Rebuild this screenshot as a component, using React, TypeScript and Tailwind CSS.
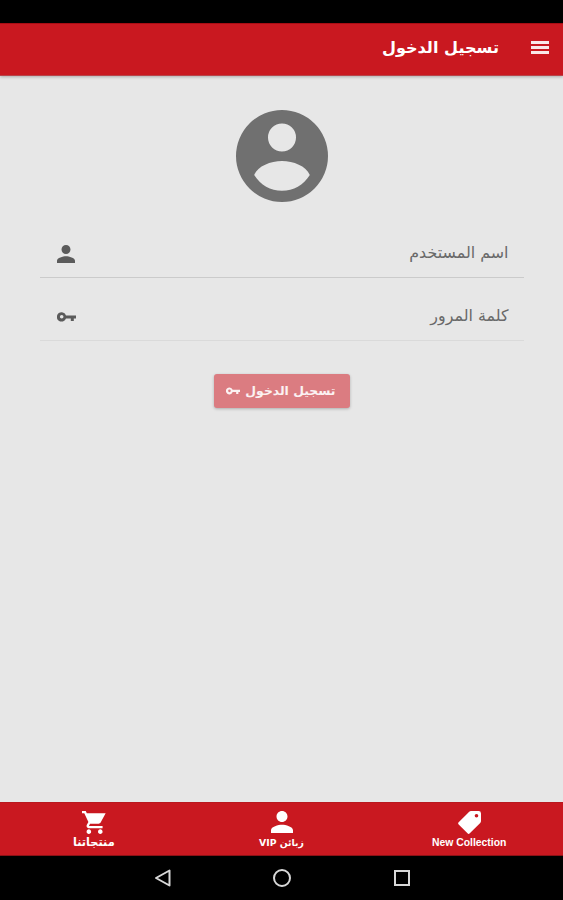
import type { ReactNode } from "react";

type IconProps = {
  className?: string;
};

function MenuIcon({ className }: IconProps) {
  return (
    <svg viewBox="0 0 18 13" className={className} fill="currentColor">
      <path d="M0 0h18v3H0zM0 5h18v3H0zM0 10h18v3H0z" />
    </svg>
  );
}

function PersonIcon({ className }: IconProps) {
  return (
    <svg viewBox="4 4 16 16" className={className} fill="currentColor">
      <path d="M12 12c2.21 0 4-1.79 4-4s-1.79-4-4-4-4 1.79-4 4 1.79 4 4 4zm0 2c-2.67 0-8 1.34-8 4v2h16v-2c0-2.66-5.33-4-8-4z" />
    </svg>
  );
}

function KeyIcon({ className }: IconProps) {
  return (
    <svg viewBox="0 0 19 10" className={className} fill="currentColor">
      <path
        fillRule="evenodd"
        d="M9 3.400A4.700 4.700 0 1 0 9 6.400h4.800V9h3V6.400H19V3.400zM4.700 3a1.800 1.800 0 1 1 0 3.600 1.800 1.800 0 0 1 0-3.600z"
      />
    </svg>
  );
}

function AvatarIcon({ className }: IconProps) {
  return (
    <svg viewBox="0 0 92 92" className={className} fill="currentColor">
      <path
        fillRule="evenodd"
        d="M46 0a46 46 0 1 0 0 92 46 46 0 0 0 0-92zM46 13.500a14 14 0 1 1 0 28 14 14 0 0 1 0-28zM18.200 65C22 56 34.500 51 46 51s24 5 27.800 14C67.500 75 57.500 80.800 46 80.800S24.500 75 18.200 65z"
      />
    </svg>
  );
}

function CartIcon({ className }: IconProps) {
  return (
    <svg viewBox="1 2 21 20" className={className} fill="currentColor">
      <path d="M7 18c-1.100 0-1.990.9-1.990 2S5.900 22 7 22s2-.9 2-2-.9-2-2-2zM1 2v2h2l3.600 7.590-1.350 2.450c-.16.28-.25.61-.25.96 0 1.100.9 2 2 2h12v-2H7.420c-.14 0-.25-.11-.25-.25l.03-.12.900-1.630h7.450c.75 0 1.410-.41 1.750-1.030L21.700 4H5.210l-.94-2H1zm16 16c-1.100 0-1.990.9-1.990 2s.89 2 1.990 2 2-.9 2-2-.9-2-2-2z" />
    </svg>
  );
}

function TagIcon({ className }: IconProps) {
  return (
    <svg viewBox="0 0 24 24" className={className} fill="currentColor">
      <path
        fillRule="evenodd"
        d="M13.500 0H21.500A2.500 2.500 0 0 1 24 2.500V10.500Q24 11.700 23.200 12.500L12.300 23.300Q11.100 24.500 9.900 23.300L.7 14.100Q-.5 12.900 .7 11.700L11.700.8Q12.500 0 13.500 0zM19.300 3a1.900 1.900 0 1 0 0 3.800 1.900 1.900 0 0 0 0-3.800z"
      />
    </svg>
  );
}

function Field({ label, icon, line }: { label: string; icon: ReactNode; line: string }) {
  return (
    <label className={`flex items-center justify-between border-b pr-[15px] pl-[17px] ${line}`}>
      <span>{label}</span>
      {icon}
    </label>
  );
}

function Tab({ label, icon }: { label: ReactNode; icon: ReactNode }) {
  return (
    <a className="flex flex-1 flex-col items-center pt-[8px]">
      {icon}
      {label}
    </a>
  );
}

export default function App() {
  return (
    <div
      dir="rtl"
      className="flex h-[900px] w-[563px] flex-col overflow-hidden bg-[#e7e7e7] font-['DejaVu_Sans',sans-serif]"
    >
      <div className="h-[23px] shrink-0 bg-black" />

      <header className="z-10 flex h-[53px] shrink-0 items-center border-t border-b border-t-[#a80d14] border-b-[#b8444a] bg-[#c91820] pr-[14px] pb-[4px] text-white shadow-[0_1px_3px_rgba(0,0,0,0.25)]">
        <MenuIcon className="h-[13px] w-[18px] opacity-90" />
        <h1 className="mr-[32px] pt-[2px] text-[16.1px] leading-none font-bold whitespace-nowrap">تسجيل الدخول</h1>
      </header>

      <main className="flex flex-1 flex-col items-center pt-[34px]">
        <AvatarIcon className="size-[92px] text-[#707070]" />

        <form className="mt-[26px] w-[484px] text-[15.900px] whitespace-nowrap text-[#696969]">
          <Field
            label="اسم المستخدم"
            line="h-[50px] pt-px border-[#cbcbcb]"
            icon={<PersonIcon className="mt-[2px] size-[18px] text-[#5b5b5b]" />}
          />
          <Field
            label="كلمة المرور"
            line="h-[63px] pt-[13px] border-[#dadada]"
            icon={<KeyIcon className="mt-[3px] h-[10px] w-[19px] text-[#5b5b5b]" />}
          />
        </form>

        <button
          type="button"
          className="mt-[33px] flex h-[34px] w-[136px] items-center justify-between rounded-[3px] bg-[#db7c81] pr-[14px] pl-[12px] text-[12.400px] font-bold whitespace-nowrap text-white/90 shadow-[0_1px_3px_rgba(0,0,0,0.25)]"
        >
          تسجيل الدخول
          <KeyIcon className="h-[8px] w-[14px]" />
        </button>
      </main>

      <nav className="flex h-[54px] shrink-0 border-t border-b border-t-[#b9181e] border-b-[#8c1116] bg-[#c91820] whitespace-nowrap text-white">
        <Tab
          icon={<TagIcon className="size-[23px]" />}
          label={
            <span dir="ltr" className="mt-[2px] font-['Liberation_Sans',sans-serif] text-[10.400px] leading-[14px] font-bold">
              New Collection
            </span>
          }
        />
        <Tab
          icon={<PersonIcon className="size-[22px]" />}
          label={<span className="mt-[3px] text-[9.300px] leading-[14px] font-bold">زبائن VIP</span>}
        />
        <Tab
          icon={<CartIcon className="h-[23px] w-[24px]" />}
          label={<span className="mt-[2px] text-[11.300px] leading-[14px] font-bold">منتجاتنا</span>}
        />
      </nav>

      <div dir="ltr" className="flex h-[44px] shrink-0 items-center justify-center gap-[102px] bg-black text-[#d8d8d8]">
        <svg viewBox="0 0 18 18" className="size-[18px]" fill="none" stroke="currentColor" strokeWidth="2">
          <path d="M16.500 1.500v15L3 9z" strokeLinejoin="round" />
        </svg>
        <svg viewBox="0 0 18 18" className="size-[18px]" fill="none" stroke="currentColor" strokeWidth="2">
          <circle cx="9" cy="9" r="8" />
        </svg>
        <svg viewBox="0 0 18 18" className="size-[18px]" fill="none" stroke="currentColor" strokeWidth="2">
          <path d="M2 2h14v14H2z" />
        </svg>
      </div>
    </div>
  );
}
